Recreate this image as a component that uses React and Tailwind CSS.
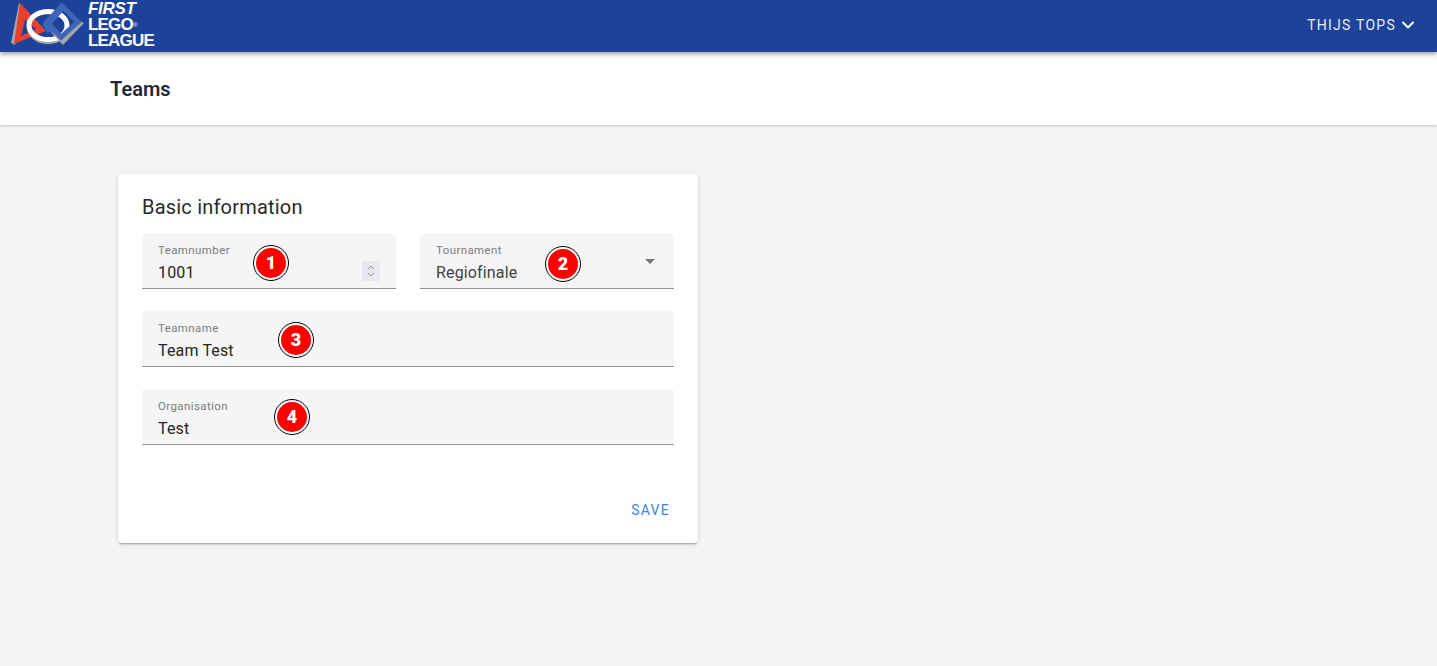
import React from "react";

function Logo() {
  return (
    <svg width="86" height="50" viewBox="0 0 86 50" className="shrink-0 block">
      <path d="M19 3 L11 43 L15 45 L23 9 Z" fill="#a3a5ab" />
      <path d="M20 3 L46 31 L14 44 Z" fill="#e8402c" />
      <path d="M25 20 L36 29 L21 36 Z" fill="#1c429a" />
      <ellipse cx="48" cy="28" rx="19.5" ry="15" fill="none" stroke="#a3a5ab" strokeWidth="2.5" />
      <ellipse cx="48" cy="25.5" rx="19" ry="14" fill="none" stroke="#ffffff" strokeWidth="5" />
      <path d="M47 28 L63 45 L84 23 L80 21 L62 40 Z" fill="#a3a5ab" />
      <path d="M62 6 L47 22 L61 37 L78 22 Z" fill="none" stroke="#3d66b8" strokeWidth="5" strokeLinejoin="miter" />
      <path d="M44 22 L53 31 L47 33 L43 25 Z" fill="#3d66b8" />
      <path d="M57 12 L62 3 L66 8 L50 26 L46 20 Z" fill="#3d66b8" />
    </svg>
  );
}

function Badge({ n, className }) {
  return (
    <div className={`absolute w-[34px] h-[34px] rounded-full bg-[#ff0000] border-2 border-white outline outline-1 outline-black flex items-center justify-center text-white font-black text-[18px] leading-none ${className}`}>
      {n}
    </div>
  );
}

function Field({ label, value, className = "", valueClass = "text-[#262626]", children }) {
  return (
    <div className={`relative h-14 bg-[#f5f5f5] rounded-t border-b border-[#949494] px-4 pt-[9px] ${className}`}>
      <div className="text-[11.5px] leading-4 text-[#7c7c7c] tracking-[0.4px]">{label}</div>
      <div className={`text-base leading-6 tracking-[0.15px] mt-[3px] ${valueClass}`}>{value}</div>
      {children}
    </div>
  );
}

export default function App() {
  return (
    <div className="min-h-[666px] bg-[#f3f4f6] font-['Roboto',sans-serif]">
      <header className="relative z-10 h-[52px] bg-[#1c429a] flex items-center justify-between pr-[22px] shadow-[0_2px_5px_rgba(0,0,0,0.4)]">
        <div className="flex items-start h-[52px]">
          <Logo />
          <div className="ml-[2px] mt-[1px] flex flex-col text-white font-['Liberation_Sans',sans-serif] font-bold leading-none tracking-[-0.8px]">
            <span className="italic font-black text-[17px] leading-[16px] tracking-[-0.3px]">FIRST</span>
            <span className="text-[17px] leading-[16px]">LEGO<span className="text-[6px] align-top font-normal">®</span></span>
            <span className="text-[17px] leading-[15px]">LEAGUE</span>
          </div>
        </div>
        <div className="flex items-center gap-[5px] text-white text-sm tracking-[1.25px] -mt-[2px]">
          <span className="opacity-90">THIJS TOPS</span>
          <svg width="14" height="14" viewBox="0 0 14 14" fill="none" stroke="white" strokeWidth="2" strokeLinecap="round" strokeLinejoin="round">
            <path d="M2 4.5 L7 9.5 L12 4.5" />
          </svg>
        </div>
      </header>

      <div className="h-[73px] bg-white shadow-[0_1px_2px_rgba(0,0,0,0.2)] pl-[110px] flex items-center">
        <h1 className="text-xl font-semibold text-[#1f2937] mt-[1px]">Teams</h1>
      </div>

      <main className="pt-[49px] pl-[118px]">
        <section className="w-[580px] h-[369px] bg-white rounded shadow-[0_2px_2px_-1px_rgba(0,0,0,0.3),0_1px_5px_rgba(0,0,0,0.12)] px-6 pt-[19px] flex flex-col">
          <h2 className="text-xl leading-7 text-[#2a2a2a] tracking-[0.2px]">Basic information</h2>
          <div className="mt-[12px] flex flex-col gap-[22px]">
            <div className="flex gap-6">
              <Field label="Teamnumber" value="1001" className="w-[254px]">
                <Badge n="1" className="left-[112px] top-[13px]" />
                <div className="absolute right-[16px] top-[28px] w-[18px] h-[20px] bg-[#e8e8ee] flex items-center justify-center">
                  <svg width="10" height="14" viewBox="0 0 10 14" fill="none" stroke="#8e8e98" strokeWidth="1" strokeLinecap="round" strokeLinejoin="round">
                    <path d="M2 5 L5 2 L8 5" />
                    <path d="M2 9 L5 12 L8 9" />
                  </svg>
                </div>
              </Field>
              <Field label="Tournament" value="Regiofinale" valueClass="text-[#424242]" className="w-[254px]">
                <Badge n="2" className="left-[126px] top-[14px]" />
                <div className="absolute right-[19px] top-[26px] w-0 h-0 border-x-[5px] border-x-transparent border-t-[5px] border-t-[#757575]" />
              </Field>
            </div>
            <Field label="Teamname" value="Team Test">
              <Badge n="3" className="left-[137px] top-[12px]" />
            </Field>
            <Field label="Organisation" value="Test">
              <Badge n="4" className="left-[133px] top-[11px]" />
            </Field>
          </div>
          <div className="mt-[57px] flex justify-end pr-[4px]">
            <button className="text-sm leading-4 text-[#3b82f6] tracking-[1.25px]">SAVE</button>
          </div>
        </section>
      </main>
    </div>
  );
}
